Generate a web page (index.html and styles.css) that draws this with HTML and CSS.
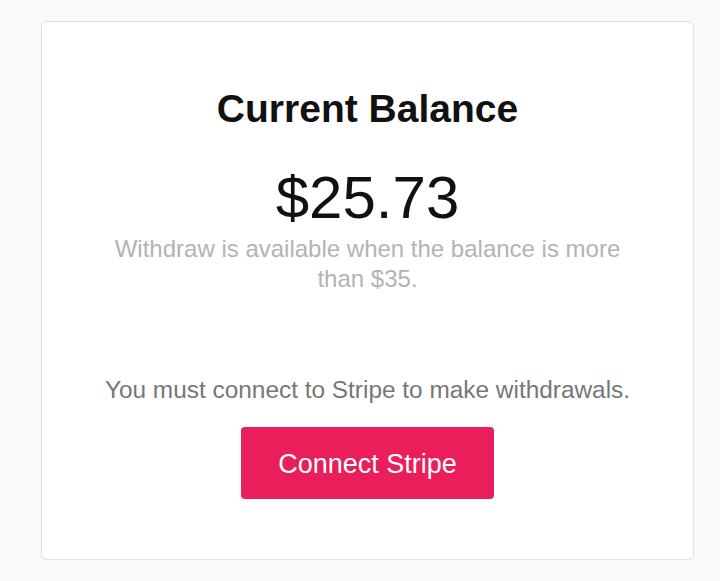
FILE: index.html
```html
<!DOCTYPE html>
<html>
<head>
    <meta charset="UTF-8">
    <title>Balance</title>
    <link rel="stylesheet" href="styles.css">
</head>
<body>
    <div class="card">
        <h2 class="title">Current Balance</h2>

        <!-- Balance -->
        <div class="amount">$25.73</div>
        <p class="hint">Withdraw is available when the balance is more than $35.</p>

        <!-- Stripe -->
        <p class="notice">You must connect to Stripe to make withdrawals.</p>
        <button class="stripe-btn">Connect Stripe</button>
    </div>
</body>
</html>
```

FILE: styles.css
```css
body { font-family: "Liberation Sans", Arial, sans-serif; background: #fafafa; margin: 0; padding: 21px 0 0 41px; }
.card { width: 653px; box-sizing: border-box; background: #fff; border: 1px solid #e0e0e0; border-radius: 6px; box-shadow: 0 1px 2px #0000000d; padding: 67px 0 60px; display: flex; flex-direction: column; align-items: center; text-align: center; }
.title { font-size: 39px; line-height: 40px; font-weight: bold; color: #111; margin: 0; }
.amount { font-size: 60px; line-height: 64px; color: #111; margin-top: 37px; }
.hint { font-size: 24px; line-height: 30px; color: #b3b3b3; max-width: 520px; margin: 4px 0 0; }
.notice { font-size: 24.4px; line-height: 30px; color: #777; margin: 81px 0 0; }
.stripe-btn { font-family: inherit; font-size: 27px; color: #fff; background: #e91e5a; border: none; border-radius: 4px; height: 72px; padding: 2px 37px 0; margin-top: 22px; cursor: pointer; }
```
